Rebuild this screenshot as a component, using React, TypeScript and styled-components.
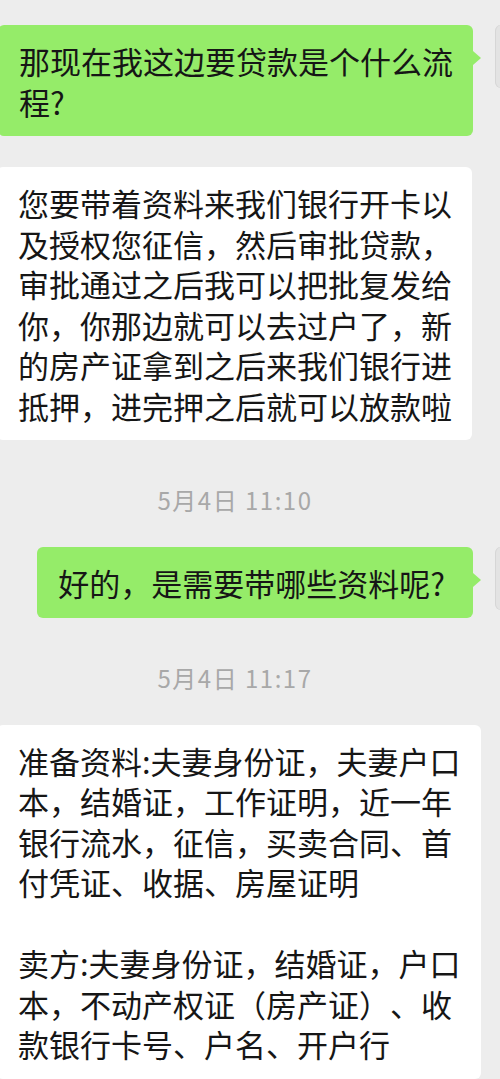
import styled, { createGlobalStyle } from 'styled-components';

type Item =
  | { kind: 'sent' | 'recv'; lines: string[]; space?: number; padRight?: number }
  | { kind: 'time'; text: string };

const chat: Item[] = [
  { kind: 'sent', lines: ['那现在我这边要贷款是个什么流', '程?'], space: 25 },
  {
    kind: 'recv',
    space: 31,
    lines: [
      '您要带着资料来我们银行开卡以',
      '及授权您征信，然后审批贷款，',
      '审批通过之后我可以把批复发给',
      '你，你那边就可以去过户了，新',
      '的房产证拿到之后来我们银行进',
      '抵押，进完押之后就可以放款啦',
    ],
  },
  { kind: 'time', text: '5月4日 11:10' },
  { kind: 'sent', lines: ['好的，是需要带哪些资料呢?'], padRight: 28 },
  { kind: 'time', text: '5月4日 11:17' },
  {
    kind: 'recv',
    lines: [
      '准备资料:夫妻身份证，夫妻户口',
      '本，结婚证，工作证明，近一年',
      '银行流水，征信，买卖合同、首',
      '付凭证、收据、房屋证明',
      '',
      '卖方:夫妻身份证，结婚证，户口',
      '本，不动产权证（房产证）、收',
      '款银行卡号、户名、开户行',
    ],
  },
];

const GlobalStyle = createGlobalStyle`
  html, body {
    margin: 0;
    padding: 0;
    background: #ededed;
  }
  * {
    box-sizing: border-box;
  }
`;

const App = () => {
  return (
    <Page>
      <GlobalStyle />
      <Thread>
        {chat.map((item, index) => {
          if (item.kind === 'time') {
            return <TimeStamp key={index}>{item.text}</TimeStamp>;
          }
          const mine = item.kind === 'sent';
          return (
            <Row key={index} $mine={mine} $space={item.space ?? 0}>
              <Bubble $mine={mine} $padRight={item.padRight ?? 20}>
                {item.lines.map((line, i) => (
                  <Line key={i}>{line}</Line>
                ))}
              </Bubble>
              {mine && <Avatar />}
            </Row>
          );
        })}
      </Thread>
    </Page>
  );
};

export default App;

const Page = styled.div`
  width: 500px;
  height: 1079px;
  overflow: hidden;
  background: #ededed;
  font-family: 'Noto Sans CJK SC', 'Noto Sans', sans-serif;
`;

// the screenshot is cropped a few pixels into the left edge of the bubbles
const Thread = styled.div`
  display: flex;
  flex-direction: column;
  margin-left: -3px;
`;

const Row = styled.div<{ $mine: boolean; $space: number }>`
  display: flex;
  align-items: flex-start;
  justify-content: ${(p) => (p.$mine ? 'flex-end' : 'flex-start')};
  gap: 22px;
  margin-top: ${(p) => p.$space}px;
  margin-right: ${(p) => (p.$mine ? '-57px' : '0')};
`;

const Bubble = styled.div<{ $mine: boolean; $padRight: number }>`
  position: relative;
  flex: none;
  padding: 16px ${(p) => p.$padRight}px 14px 21px;
  border-radius: 6px;
  background: ${(p) => (p.$mine ? '#95ec69' : '#ffffff')};
  color: #161616;
  font-size: 31px;
  line-height: 40.5px;
  white-space: nowrap;
  text-spacing-trim: space-all;
  font-kerning: none;

  ${(p) =>
    p.$mine &&
    `
    &::after {
      content: '';
      position: absolute;
      top: 26px;
      right: -8px;
      border-top: 7px solid transparent;
      border-bottom: 7px solid transparent;
      border-left: 8px solid #95ec69;
    }
  `}
`;

const Line = styled.span`
  display: block;
  min-height: 40.5px;
`;

const Avatar = styled.div`
  flex: none;
  width: 62px;
  height: 63px;
  border-radius: 6px;
  background: #e3e3e3;
  box-shadow: inset 1px 0 0 #d6d6d6;
`;

const TimeStamp = styled.div`
  padding: 46px 27px 33px 0;
  text-align: center;
  font-size: 24px;
  line-height: 28px;
  letter-spacing: 1.5px;
  color: #a8a8a8;
`;
